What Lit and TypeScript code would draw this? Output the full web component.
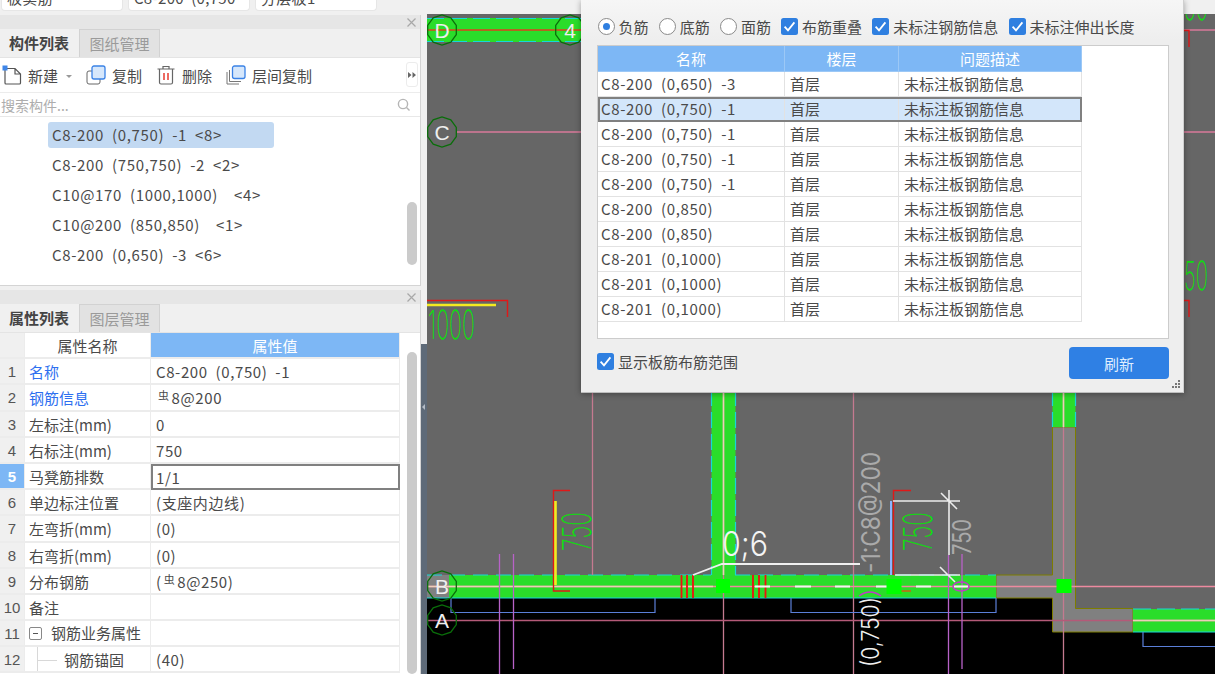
import { LitElement, html, css, svg } from 'lit';
import { customElement } from 'lit/decorators.js';

const COMPONENTS = [
    { text: 'C8-200  (0,750)  -1  <8>', selected: true },
    { text: 'C8-200  (750,750)  -2  <2>' },
    { text: 'C10@170  (1000,1000)    <4>' },
    { text: 'C10@200  (850,850)    <1>' },
    { text: 'C8-200  (0,650)  -3  <6>' },
];

const PROPS = [
    { name: '名称', value: 'C8-200  (0,750)  -1', link: true },
    { name: '钢筋信息', value: '8@200', link: true, bar: true },
    { name: '左标注(mm)', value: '0' },
    { name: '右标注(mm)', value: '750' },
    { name: '马凳筋排数', value: '1/1', active: true },
    { name: '单边标注位置', value: '(支座内边线)' },
    { name: '左弯折(mm)', value: '(0)' },
    { name: '右弯折(mm)', value: '(0)' },
    { name: '分布钢筋', value: '8@250)', bar: true, open: true },
    { name: '备注', value: '' },
    { name: '钢筋业务属性', value: '', group: true },
    { name: '钢筋锚固', value: '(40)', child: true },
];

const ISSUES = [
    'C8-200  (0,650)  -3',
    'C8-200  (0,750)  -1',
    'C8-200  (0,750)  -1',
    'C8-200  (0,750)  -1',
    'C8-200  (0,750)  -1',
    'C8-200  (0,850)',
    'C8-200  (0,850)',
    'C8-201  (0,1000)',
    'C8-201  (0,1000)',
    'C8-201  (0,1000)',
];

// axis bubble on the drawing, an octagon with the axis name
const bubble = (x: number, y: number, label: string) => {
    const pts = [];
    for (let i = 0; i < 10; i++) {
        const a = (Math.PI * 2 * i) / 10 + Math.PI / 10;
        pts.push(`${(x + 15 * Math.cos(a)).toFixed(1)},${(y + 15 * Math.sin(a)).toFixed(1)}`);
    }
    return svg`
        <polygon points="${pts.join(' ')}" fill="none" stroke="#0a6e0a" stroke-width="1.3" />
        <text x="${x}" y="${y + 7.5}" class="axis" text-anchor="middle">${label}</text>
    `;
};

const rotated = (x: number, y: number, cls: string, len: number, label: string) => svg`
    <text transform="translate(${x} ${y}) rotate(-90)" class="${cls}" textLength="${len}" lengthAdjust="spacingAndGlyphs">${label}</text>
`;

const checkbox = html`
    <svg class="check" viewBox="0 0 17 17">
        <rect width="17" height="17" rx="2.5" fill="#2f7fe0" />
        <path d="M3.6 8.6 L7 12.4 L13.4 4.4" fill="none" stroke="#fff" stroke-width="1.8" />
    </svg>
`;

@customElement('app-root')
export class AppRoot extends LitElement {
    static styles = css`
        :host {
            display: block;
            width: 1215px;
            height: 674px;
            position: relative;
            overflow: hidden;
            background: #f0f0f0;
            font-family: 'Noto Sans CJK SC', 'Liberation Sans', sans-serif;
            color: #4a4a4a;
        }

        /* clipped combo boxes at the very top */
        .top {
            height: 14px;
            display: flex;
            gap: 5px;
            padding-left: 1px;
            overflow: hidden;
        }
        .combo {
            width: 122px;
            height: 11px;
            background: #fff;
            border-radius: 0 0 4px 4px;
            border: 1px solid #e6e6e6;
            border-top: none;
            font-size: 15px;
            line-height: 20px;
            overflow: hidden;
            white-space: pre;
            padding-left: 5px;
            box-sizing: border-box;
            letter-spacing: 0.3px;
        }
        .combo span {
            display: block;
            margin-top: -12px;
        }

        .main {
            display: flex;
            height: 660px;
        }
        .side {
            width: 421px;
            display: flex;
            flex-direction: column;
            gap: 4px;
        }
        .splitter {
            width: 6px;
            position: relative;
        }
        .splitter .handle {
            position: absolute;
            left: 0;
            right: 0;
            top: 330px;
            bottom: 0;
            background: #5e6a78;
        }
        .splitter .handle::after {
            content: '';
            position: absolute;
            left: 1px;
            top: 60px;
            border: 3px solid transparent;
            border-right: 3px solid #b4bcc6;
            border-left: none;
        }
        .canvas {
            flex: 1;
            min-width: 0;
        }
        .canvas svg {
            display: block;
            width: 788px;
            height: 660px;
        }

        .panel {
            position: relative;
            display: flex;
            flex-direction: column;
            background: #fff;
            border-right: 1px solid #d4d4d4;
            overflow: hidden;
        }
        .panel.first {
            height: 271px;
            margin-top: 1px;
            border-bottom: 1px solid #d4d4d4;
            box-sizing: border-box;
        }
        .panel.second {
            flex: 1;
        }
        .caption {
            height: 14px;
            background: #e6e6e6;
            position: relative;
            flex: none;
        }
        .caption svg {
            position: absolute;
            right: 4px;
            top: 3px;
            width: 9px;
            height: 9px;
        }
        .tabs {
            height: 28px;
            display: flex;
            background: #f0f0f0;
            flex: none;
            font-size: 15px;
            line-height: 27px;
            border-bottom: 1px solid #e4e4e4;
        }
        .tab {
            width: 78px;
            text-align: center;
            font-weight: 700;
            color: #444;
        }
        .tab.off {
            width: 81px;
            margin-left: 1px;
            box-sizing: border-box;
            background: #e2e2e2;
            border: 1px solid #d2d2d2;
            border-bottom: none;
            font-weight: 400;
            color: #9a9a9a;
        }

        .toolbar {
            height: 34px;
            display: flex;
            align-items: center;
            font-size: 15px;
            border-bottom: 1px solid #ececec;
            flex: none;
            position: relative;
            padding-left: 2px;
        }
        .tool {
            display: flex;
            align-items: center;
            gap: 6px;
        }
        .tool svg {
            width: 20px;
            height: 20px;
            flex: none;
        }
        .tool.copy {
            margin-right: 14px;
        }
        .tool.del {
            margin-right: 14px;
        }
        .caret {
            width: 0;
            height: 0;
            margin: 2px 14px 0 8px;
            border: 3px solid transparent;
            border-top: 3px solid #999;
            border-bottom: none;
        }
        .more {
            position: absolute;
            left: 406px;
            top: 4px;
            width: 12px;
            height: 25px;
            background: #fff;
            border: 1px solid #ececec;
            border-radius: 3px;
            box-sizing: border-box;
            display: flex;
            align-items: center;
            justify-content: center;
        }
        .more svg {
            width: 8px;
            height: 6px;
        }

        .search {
            height: 23px;
            flex: none;
            display: flex;
            align-items: center;
            justify-content: space-between;
            padding: 0 9px 0 1px;
            font-size: 14px;
            color: #adadad;
            border-bottom: 1px solid #e8e8e8;
        }
        .search svg {
            width: 14px;
            height: 14px;
        }

        .list {
            flex: 1;
            position: relative;
            padding: 5px 0 0 48px;
            display: flex;
            flex-direction: column;
            gap: 4px;
            align-items: flex-start;
            font-size: 15px;
            letter-spacing: 0.65px;
        }
        .item {
            height: 26px;
            line-height: 26px;
            padding: 0 4px;
            white-space: pre;
            border-radius: 3px;
        }
        .item.selected {
            background: #c2d9f2;
            padding-right: 52px;
        }
        .thumb {
            position: absolute;
            left: 407px;
            width: 10px;
            background: #cbcbcb;
            border-radius: 5px;
        }
        .thumb.upper {
            top: 85px;
            height: 63px;
        }
        .thumb.lower {
            top: 62px;
            bottom: 0;
        }

        .props {
            display: grid;
            grid-template-columns: 25px 126px 249px;
            grid-auto-rows: 26.2px;
            font-size: 15px;
            line-height: 26px;
        }
        .props > div {
            box-sizing: border-box;
            border-bottom: 2px solid #ececec;
            border-right: 1px solid #ececec;
            padding-left: 4px;
            white-space: pre;
            overflow: hidden;
        }
        .props .no {
            background: #f0f0f0;
            padding: 0;
            text-align: center;
            color: #555;
            font-family: 'Liberation Sans', sans-serif;
        }
        .props .no.on {
            background: #7db7f5;
            color: #fff;
            font-weight: 700;
        }
        .props .head {
            text-align: center;
            padding: 0;
        }
        .props .head.on {
            background: #7db7f5;
            color: #fff;
        }
        .props .val {
            padding-left: 5px;
            letter-spacing: 0.6px;
        }
        .props .val.active {
            border: 2px solid #808080;
            line-height: 24px;
            padding-left: 3px;
        }
        .props .link {
            color: #2d6ff0;
        }
        .bar {
            font-size: 11px;
            position: relative;
            top: -4px;
            margin: 0 2px 0 2px;
        }
        .props .group {
            display: flex;
            align-items: center;
            padding-left: 4px;
            gap: 9px;
        }
        .minus {
            width: 13px;
            height: 13px;
            border: 1px solid #888;
            border-radius: 2px;
            box-sizing: border-box;
            position: relative;
            flex: none;
        }
        .minus::after {
            content: '';
            position: absolute;
            left: 3px;
            right: 3px;
            top: 5px;
            height: 1px;
            background: #555;
        }
        .props .child {
            padding-left: 39px;
            position: relative;
        }
        .props .child::before {
            content: '';
            position: absolute;
            left: 12px;
            top: 0;
            bottom: 0;
            width: 1px;
            background: #d8d8d8;
        }
        .props .child::after {
            content: '';
            position: absolute;
            left: 12px;
            top: 13px;
            width: 20px;
            height: 1px;
            background: #d8d8d8;
        }

        /* floating check dialog, its title is off screen */
        .dialog {
            position: absolute;
            left: 581px;
            top: 0;
            width: 603px;
            height: 393px;
            box-sizing: border-box;
            background: linear-gradient(#f6f6f6, #eeeeee 40px);
            border-right: 1px solid #cfcfcf;
            border-bottom: 1px solid #bdbdbd;
            box-shadow: 0 1px 6px rgba(0, 0, 0, 0.35);
            padding: 17px 14px 0 16px;
            font-size: 15px;
            display: flex;
            flex-direction: column;
        }
        .filters {
            height: 18px;
            display: flex;
            align-items: center;
            gap: 10.2px;
            margin-left: 0.5px;
        }
        .opt {
            display: flex;
            align-items: center;
            gap: 4px;
            white-space: nowrap;
        }
        .radio {
            width: 17px;
            height: 17px;
            box-sizing: border-box;
            border: 1px solid #8a8a8a;
            border-radius: 50%;
            background: #fff;
            position: relative;
        }
        .radio.on::after {
            content: '';
            position: absolute;
            left: 4px;
            top: 4px;
            width: 7px;
            height: 7px;
            border-radius: 50%;
            background: #2f7fe0;
        }
        .check {
            width: 17px;
            height: 17px;
            flex: none;
        }
        .issues {
            margin-top: 10px;
            height: 294px;
            box-sizing: border-box;
            background: #fff;
            border: 1px solid #cccccc;
            flex: none;
        }
        .grid {
            display: grid;
            grid-template-columns: 187px 114px 183px;
            grid-template-rows: 26px;
            grid-auto-rows: 25px;
            line-height: 24px;
            width: 484px;
        }
        .grid > div {
            box-sizing: border-box;
            border-right: 1px solid #e2e2e2;
            border-bottom: 1px solid #e2e2e2;
            white-space: nowrap;
            overflow: hidden;
        }
        .grid .hd {
            background: #7db7f5;
            color: #fff;
            text-align: center;
            border-color: #9cc8f6;
            line-height: 25px;
        }
        .grid .row {
            display: grid;
            grid-template-columns: subgrid;
            grid-column: 1 / -1;
            padding: 0;
            border: none;
        }
        .grid .row > div {
            box-sizing: border-box;
            border-right: 1px solid #e2e2e2;
            border-bottom: 1px solid #e2e2e2;
            padding-left: 5px;
        }
        .grid .row > .name {
            padding-left: 3px;
            white-space: pre;
            letter-spacing: 0.65px;
        }
        .grid .row.selected {
            background: #d3e6fa;
            outline: 2px solid #808080;
            outline-offset: -2px;
        }
        .footer {
            flex: 1;
            display: flex;
            align-items: flex-start;
            justify-content: space-between;
            padding-top: 8px;
            position: relative;
        }
        .footer .opt {
            margin-top: 4px;
        }
        .refresh {
            width: 100px;
            height: 32px;
            border: none;
            border-radius: 4px;
            background: #2f80e4;
            color: #dfeeff;
            font: inherit;
            padding: 0;
        }
        .grip {
            position: absolute;
            right: -12px;
            bottom: 3px;
            width: 10px;
            height: 10px;
        }

        text {
            font-family: 'Liberation Sans', sans-serif;
        }
        .axis {
            font-size: 21px;
            fill: #efefef;
        }
        .dim {
            font-family: 'Inter', sans-serif;
            font-weight: 200;
            font-size: 40px;
            fill: #10dc10;
        }
        .gray {
            font-family: 'Inter', sans-serif;
            font-weight: 400;
            font-size: 26px;
            fill: #aaaaaa;
        }
        .white {
            font-family: 'Inter', sans-serif;
            font-weight: 300;
            font-size: 24px;
            fill: #f0f0f0;
        }
        .big {
            font-family: 'Inter', sans-serif;
            font-weight: 300;
            font-size: 34px;
            fill: #f4f4f4;
        }
    `;

    private renderDrawing() {
        return svg`
            <rect x="427" y="14" width="788" height="660" fill="#666666" />
            <path d="M427 598 H1052 V632 H1133 L1215 632 V674 H427 Z" fill="#000" />

            <!-- walls without rebar -->
            <path d="M1052.5 427 H1075.5 V608.5 H1133 V632 H1052.5 V598 H996 V575 H1052.5 Z" fill="#808080" stroke="#7d7d00" stroke-width="1" />

            <!-- walls with rebar -->
            <rect x="427" y="18" width="160" height="24" fill="#2add2a" />
            <rect x="427" y="575" width="569" height="23" fill="#2add2a" />
            <rect x="711.5" y="390" width="24" height="185" fill="#2add2a" />
            <rect x="1052.5" y="390" width="23" height="37" fill="#2add2a" />
            <rect x="1133" y="609" width="82" height="23" fill="#2add2a" />
            <rect x="427" y="575" width="22" height="23" fill="#808080" />
            <g stroke="#16d8d8" stroke-width="1.2" fill="none">
                <path d="M427 18.5 H587 M427 41.5 H587" stroke-dasharray="17 6" />
                <path d="M427 575 H711 M735 575 H996" stroke-dasharray="15 8" />
                <path d="M427 598 H996 M1133 632 H1215" />
                <path d="M711.5 390 V575 M735.5 390 V575 M1052.5 390 V427 M1075.5 390 V427" stroke-dasharray="16 6" />
                <path d="M1133 609 H1215" stroke-dasharray="18 6" />
            </g>

            <!-- axis lines -->
            <g fill="none" stroke-width="1.3">
                <path d="M427 30 H587" stroke="#e23c1e" />
                <path d="M1183 30 H1215 M457 132 H587 M1183 132 H1215" stroke="#d9799a" />
                <path d="M592.5 42 V575 M853.5 390 V674 M723.5 390 V674 M1063.5 390 V674" stroke="#c47a90" />
                <path d="M427 586.5 H1215 M1133 620.5 H1215" stroke="#ee8aa0" />
                <path d="M427 620.5 H1133" stroke="#b45a78" />
            </g>
            <path d="M427 586.5 H713 M723.5 390 V575 M1063.5 393 V427 M1133 620.5 H1215" stroke="#eecdb8" stroke-width="1.6" fill="none" />

            <!-- blue reinforcement range -->
            <path d="M451 598 V612.5 H655 V598 M791 598 V612.5 H996 V598 M1143 632 V646.5 H1215" stroke="#5b7fd8" stroke-width="1.2" fill="none" />

            <!-- purple leaders -->
            <path d="M499.5 554 V674 M513.5 554 V669 M948.5 555 V674 M962 554 V669" stroke="#b862c8" stroke-width="1.3" fill="none" />
            <ellipse cx="961" cy="586.5" rx="8" ry="4.5" fill="none" stroke="#c03cc8" stroke-width="1.5" />
            <path d="M859 596 Q870 588 881 596" fill="none" stroke="#c03cc8" stroke-width="1.4" />
            <path d="M901 591 H911" stroke="#d85a10" stroke-width="1.4" />

            <!-- red rebar marks -->
            <path d="M681.5 575 V598 M687 575 V598 M693 575 V598 M753 575 V598 M759 575 V598 M765.5 575 V598" stroke="#f01010" stroke-width="1.8" />
            <path d="M570 490.5 H553.5 V591 H570 M911 490.5 H893.5 V575 M507.5 317 V300.5 H427 M1184 30.5 H1189 V47 M1184 300.5 H1189 V317" fill="none" stroke="#e01818" stroke-width="1.4" />
            <path d="M427 305 H496" stroke="#f5ea20" stroke-width="2.6" />
            <path d="M555.5 501 V585" stroke="#f5ea20" stroke-width="2.6" />
            <path d="M891 501 V575" stroke="#8ab4ff" stroke-width="2" />

            <!-- white dashes and leaders -->
            <path d="M755 586.5 H770 M795 586.5 H811 M835 586.5 H850 M876 586.5 H887 M916 586.5 H931 M954 586.5 H968" stroke="#f4f4f4" stroke-width="2.2" />
            <path d="M693 575 L722 564 H860" fill="none" stroke="#f0f0f0" stroke-width="1.8" />
            <path d="M893 501 H960 M949 490 V555 M941 493 L957 509 M940 567 L955 582 M895 575 H960" fill="none" stroke="#ececec" stroke-width="1.6" />

            <!-- nodes -->
            <rect x="716" y="579" width="14" height="14" fill="#00ff00" />
            <rect x="886.5" y="579" width="15" height="15" fill="#00ff00" />
            <rect x="1056.5" y="579" width="15" height="14" fill="#00ff00" />

            ${bubble(442, 30, 'D')}
            ${bubble(570, 30, '4')}
            ${bubble(442, 132, 'C')}
            ${bubble(442, 586, 'B')}
            ${bubble(442, 620, 'A')}

            <!-- annotations -->
            <text x="428" y="339" class="dim" textLength="47" lengthAdjust="spacingAndGlyphs">1000</text>
            <text x="1184" y="290" class="dim" textLength="24" lengthAdjust="spacingAndGlyphs">50</text>
            <text x="1184" y="20" class="dim" textLength="24" lengthAdjust="spacingAndGlyphs">50</text>
            ${rotated(591, 551, 'dim', 39, '750')}
            ${rotated(932, 551, 'dim', 39, '750')}
            ${rotated(971, 555, 'gray', 36, '750')}
            ${rotated(880, 573, 'gray', 121, '-1:C8@200')}
            ${rotated(879, 667, 'white', 70, '(0,750)')}
            <text x="722" y="556" class="big" textLength="46" lengthAdjust="spacingAndGlyphs">0;6</text>
        `;
    }

    private renderToolbar() {
        return html`
            <div class="toolbar">
                <div class="tool">
                    <svg viewBox="0 0 20 20">
                        <path d="M3 3.5 H13 L18.5 9 V18 Q18.5 19 17.5 19 H4 Q3 19 3 18 Z M13 3.5 V9 H18.5" fill="#fff" stroke="#555" stroke-width="1.2" />
                        <rect x="0.5" y="0.5" width="5" height="5" fill="#3f86e8" />
                    </svg>
                    新建
                </div>
                <span class="caret"></span>
                <div class="tool copy">
                    <svg viewBox="0 0 20 20">
                        <rect x="1" y="6" width="13" height="13" rx="2" fill="#fff" stroke="#666" />
                        <rect x="6" y="1" width="13" height="13" rx="2" fill="#d6e7fb" stroke="#3a82e6" stroke-width="1.3" />
                    </svg>
                    复制
                </div>
                <div class="tool del">
                    <svg viewBox="0 0 20 20">
                        <path d="M1.5 4 H18.5 M7 4 V1.5 H13 V4 M3.5 4 V17.5 Q3.5 19 5 19 H15 Q16.5 19 16.5 17.5 V4" fill="none" stroke="#666" stroke-width="1.2" />
                        <path d="M8 8 V15 M12 8 V15" stroke="#e8473c" stroke-width="1.6" />
                    </svg>
                    删除
                </div>
                <div class="tool">
                    <svg viewBox="0 0 20 20">
                        <path d="M1 7 V19 H13" fill="none" stroke="#777" />
                        <path d="M3.5 5 V16.5 H15" fill="none" stroke="#777" />
                        <rect x="6.5" y="1" width="12.5" height="12.5" rx="2" fill="#d6e7fb" stroke="#3a82e6" stroke-width="1.3" />
                    </svg>
                    层间复制
                </div>
                <div class="more">
                    <svg viewBox="0 0 8 6" fill="#666"><path d="M0 0 L3.5 3 L0 6 Z M4.5 0 L8 3 L4.5 6 Z" /></svg>
                </div>
            </div>
        `;
    }

    private renderProps() {
        return html`
            <div class="props">
                <div class="no"></div>
                <div class="head">属性名称</div>
                <div class="head on">属性值</div>
                ${PROPS.map((p, i) => html`
                    <div class="no ${p.active ? 'on' : ''}">${i + 1}</div>
                    ${p.group
                        ? html`<div class="group"><span class="minus"></span>${p.name}</div>`
                        : html`<div class="${p.link ? 'link' : ''} ${p.child ? 'child' : ''}">${p.name}</div>`}
                    <div class="val ${p.active ? 'active' : ''}">${p.open ? '(' : ''}${p.bar ? html`<span class="bar">虫</span>` : ''}${p.value}</div>
                `)}
            </div>
        `;
    }

    private renderDialog() {
        return html`
            <div class="dialog">
                <div class="filters">
                    <label class="opt"><span class="radio on"></span>负筋</label>
                    <label class="opt"><span class="radio"></span>底筋</label>
                    <label class="opt"><span class="radio"></span>面筋</label>
                    <label class="opt">${checkbox}布筋重叠</label>
                    <label class="opt">${checkbox}未标注钢筋信息</label>
                    <label class="opt">${checkbox}未标注伸出长度</label>
                </div>
                <div class="issues">
                    <div class="grid">
                        <div class="hd">名称</div>
                        <div class="hd">楼层</div>
                        <div class="hd">问题描述</div>
                        ${ISSUES.map((name, i) => html`
                            <div class="row ${i === 1 ? 'selected' : ''}">
                                <div class="name">${name}</div>
                                <div>首层</div>
                                <div>未标注板钢筋信息</div>
                            </div>
                        `)}
                    </div>
                </div>
                <div class="footer">
                    <label class="opt">${checkbox}显示板筋布筋范围</label>
                    <button class="refresh">刷新</button>
                    <svg class="grip" viewBox="0 0 10 10" fill="#777">
                        <rect x="7" y="1" width="2" height="2" />
                        <rect x="4" y="4" width="2" height="2" />
                        <rect x="7" y="4" width="2" height="2" />
                        <rect x="1" y="7" width="2" height="2" />
                        <rect x="4" y="7" width="2" height="2" />
                        <rect x="7" y="7" width="2" height="2" />
                    </svg>
                </div>
            </div>
        `;
    }

    render() {
        const close = html`
            <svg viewBox="0 0 9 9"><path d="M0.5 0.5 L8.5 8.5 M8.5 0.5 L0.5 8.5" stroke="#a8a8a8" stroke-width="1.2" /></svg>
        `;
        return html`
            <div class="top">
                <div class="combo"><span>板实筋</span></div>
                <div class="combo"><span>C8-200  (0,750</span></div>
                <div class="combo"><span>分层板1</span></div>
            </div>
            <div class="main">
                <div class="side">
                    <section class="panel first">
                        <div class="caption">${close}</div>
                        <div class="tabs">
                            <div class="tab">构件列表</div>
                            <div class="tab off">图纸管理</div>
                        </div>
                        ${this.renderToolbar()}
                        <div class="search">
                            <span>搜索构件...</span>
                            <svg viewBox="0 0 14 14"><circle cx="6" cy="6" r="4.6" fill="none" stroke="#b5b5b5" stroke-width="1.4" /><path d="M9.5 9.5 L12.5 12.5" stroke="#b5b5b5" stroke-width="1.4" /></svg>
                        </div>
                        <div class="list">
                            ${COMPONENTS.map((c) => html`<div class="item ${c.selected ? 'selected' : ''}">${c.text}</div>`)}
                            <div class="thumb upper"></div>
                        </div>
                    </section>
                    <section class="panel second">
                        <div class="caption">${close}</div>
                        <div class="tabs">
                            <div class="tab">属性列表</div>
                            <div class="tab off">图层管理</div>
                        </div>
                        ${this.renderProps()}
                        <div class="thumb lower"></div>
                    </section>
                </div>
                <div class="splitter"><div class="handle"></div></div>
                <div class="canvas">
                    <svg viewBox="427 14 788 660">${this.renderDrawing()}</svg>
                </div>
            </div>
            ${this.renderDialog()}
        `;
    }
}
